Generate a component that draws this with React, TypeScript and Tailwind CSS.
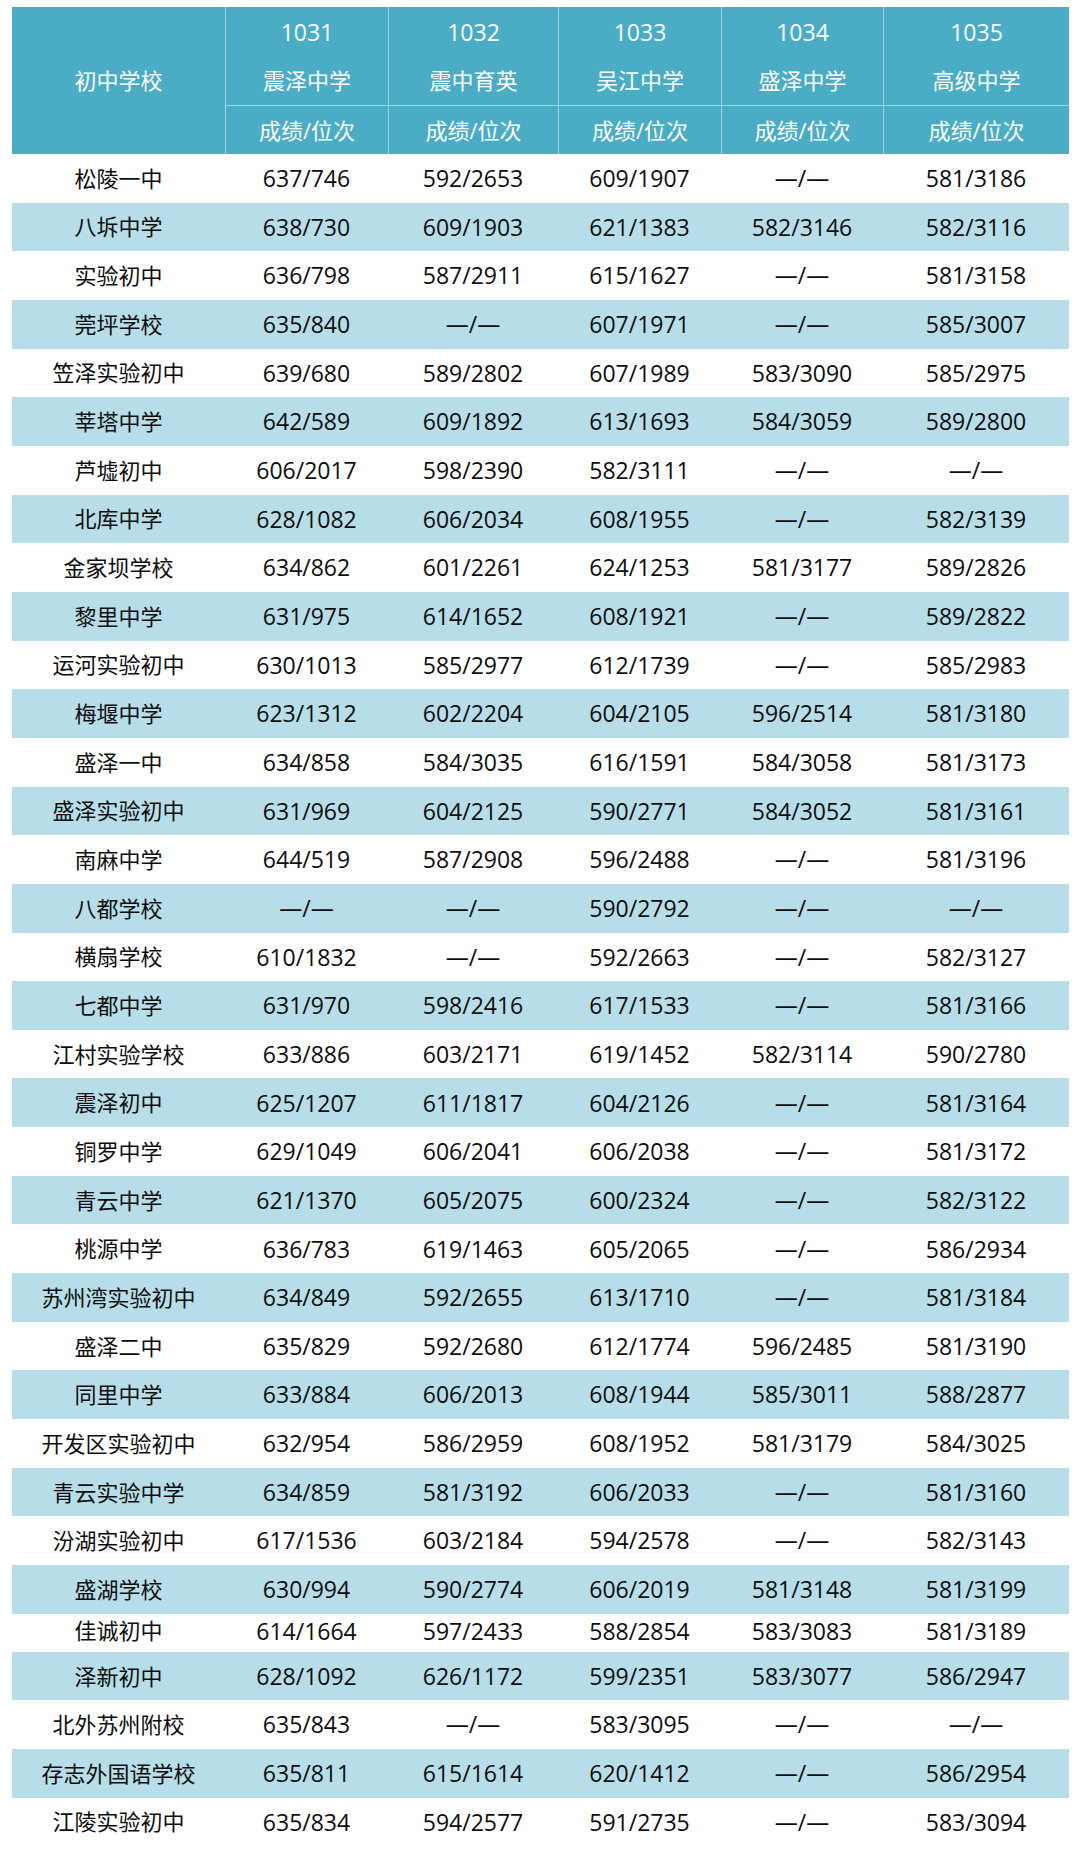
const codes = ["1031", "1032", "1033", "1034", "1035"];
const schools = ["震泽中学", "震中育英", "吴江中学", "盛泽中学", "高级中学"];

const N = "—/—";

const rows: [string, string[]][] = [
	["松陵一中", ["637/746", "592/2653", "609/1907", N, "581/3186"]],
	["八坼中学", ["638/730", "609/1903", "621/1383", "582/3146", "582/3116"]],
	["实验初中", ["636/798", "587/2911", "615/1627", N, "581/3158"]],
	["莞坪学校", ["635/840", N, "607/1971", N, "585/3007"]],
	["笠泽实验初中", ["639/680", "589/2802", "607/1989", "583/3090", "585/2975"]],
	["莘塔中学", ["642/589", "609/1892", "613/1693", "584/3059", "589/2800"]],
	["芦墟初中", ["606/2017", "598/2390", "582/3111", N, N]],
	["北库中学", ["628/1082", "606/2034", "608/1955", N, "582/3139"]],
	["金家坝学校", ["634/862", "601/2261", "624/1253", "581/3177", "589/2826"]],
	["黎里中学", ["631/975", "614/1652", "608/1921", N, "589/2822"]],
	["运河实验初中", ["630/1013", "585/2977", "612/1739", N, "585/2983"]],
	["梅堰中学", ["623/1312", "602/2204", "604/2105", "596/2514", "581/3180"]],
	["盛泽一中", ["634/858", "584/3035", "616/1591", "584/3058", "581/3173"]],
	["盛泽实验初中", ["631/969", "604/2125", "590/2771", "584/3052", "581/3161"]],
	["南麻中学", ["644/519", "587/2908", "596/2488", N, "581/3196"]],
	["八都学校", [N, N, "590/2792", N, N]],
	["横扇学校", ["610/1832", N, "592/2663", N, "582/3127"]],
	["七都中学", ["631/970", "598/2416", "617/1533", N, "581/3166"]],
	["江村实验学校", ["633/886", "603/2171", "619/1452", "582/3114", "590/2780"]],
	["震泽初中", ["625/1207", "611/1817", "604/2126", N, "581/3164"]],
	["铜罗中学", ["629/1049", "606/2041", "606/2038", N, "581/3172"]],
	["青云中学", ["621/1370", "605/2075", "600/2324", N, "582/3122"]],
	["桃源中学", ["636/783", "619/1463", "605/2065", N, "586/2934"]],
	["苏州湾实验初中", ["634/849", "592/2655", "613/1710", N, "581/3184"]],
	["盛泽二中", ["635/829", "592/2680", "612/1774", "596/2485", "581/3190"]],
	["同里中学", ["633/884", "606/2013", "608/1944", "585/3011", "588/2877"]],
	["开发区实验初中", ["632/954", "586/2959", "608/1952", "581/3179", "584/3025"]],
	["青云实验中学", ["634/859", "581/3192", "606/2033", N, "581/3160"]],
	["汾湖实验初中", ["617/1536", "603/2184", "594/2578", N, "582/3143"]],
	["盛湖学校", ["630/994", "590/2774", "606/2019", "581/3148", "581/3199"]],
	["佳诚初中", ["614/1664", "597/2433", "588/2854", "583/3083", "581/3189"]],
	["泽新初中", ["628/1092", "626/1172", "599/2351", "583/3077", "586/2947"]],
	["北外苏州附校", ["635/843", N, "583/3095", N, N]],
	["存志外国语学校", ["635/811", "615/1614", "620/1412", N, "586/2954"]],
	["江陵实验初中", ["635/834", "594/2577", "591/2735", N, "583/3094"]],
];

const cols = "grid grid-cols-[213px_163px_170px_163px_162px_186px]";

export default function App() {
	return (
		<div className="w-[1080px] h-[1854px] bg-white font-['Open_Sans','Noto_Sans_CJK_SC',sans-serif] text-[22px] text-[#0d0d0d]">
			<div className="ml-[12px] pt-[7px] w-[1057px]">
				{/* header */}
				<div className={`${cols} grid-rows-[49px_49px_49px] bg-[#4bacc6] text-white`}>
					<div className="row-span-3 flex items-center justify-center">初中学校</div>
					{codes.map((c) => (
						<div key={c} className="flex items-center justify-center border-l border-[#a3d4e2] pt-[2px] text-[23px]">
							{c}
						</div>
					))}
					{schools.map((s) => (
						<div key={s} className="flex items-center justify-center border-l border-[#a3d4e2]">
							{s}
						</div>
					))}
					{schools.map((s) => (
						<div key={s + "-x"} className="flex items-center justify-center border-l border-t border-[#a3d4e2]">
							成绩/位次
						</div>
					))}
				</div>

				{/* body */}
				{rows.map(([name, vals], i) => (
					<div
						key={name}
						className={`${cols} ${i % 2 === 1 ? "bg-[#b7dee8]" : "bg-white"} ${
							name === "佳诚初中" ? "h-[38px] pb-[10px]" : "h-[48.66px]"
						}`}
					>
						<div className="flex items-center justify-center">{name}</div>
						{vals.map((v, j) => (
							<div key={j} className="flex items-center justify-center text-[23px]">
								{v}
							</div>
						))}
					</div>
				))}
			</div>
		</div>
	);
}
